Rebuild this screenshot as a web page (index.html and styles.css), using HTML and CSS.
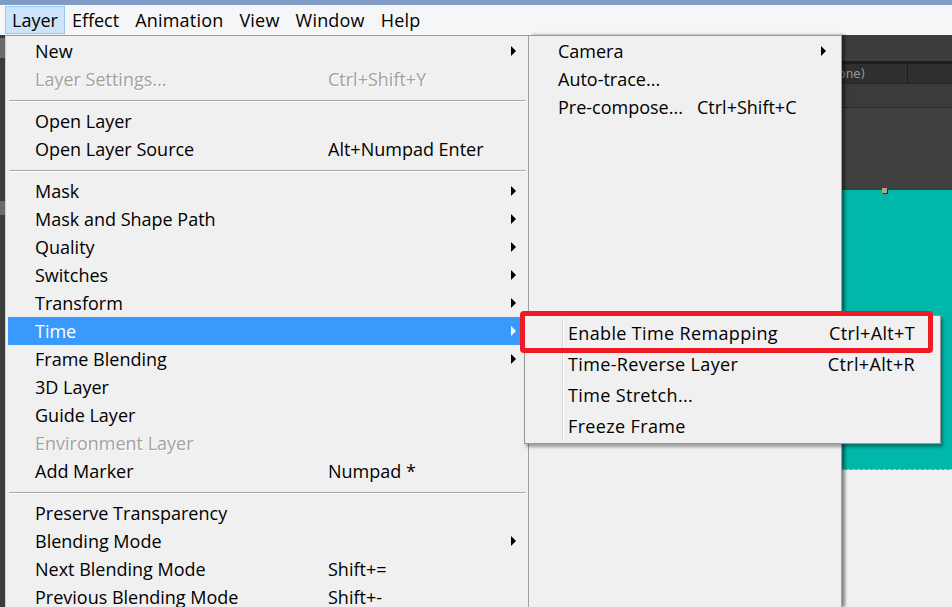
FILE: index.html
```html
<!DOCTYPE html>
<html>
<head>
<meta charset="utf-8">
<link rel="stylesheet" href="styles.css">
</head>
<body>
<div class="screen">
  <div class="titlestrip"></div>
  <div class="menubar">
    <span class="mb-item active">Layer</span>
    <span class="mb-item">Effect</span>
    <span class="mb-item">Animation</span>
    <span class="mb-item">View</span>
    <span class="mb-item">Window</span>
    <span class="mb-item">Help</span>
  </div>
  <div class="workspace">
    <div class="leftstrip"><div class="ls-icon"></div><div class="ls-light"></div></div>
    <div class="menu main">
      <div class="item"><span class="label">New</span><span class="key"></span><span class="arrow"></span></div>
      <div class="item disabled"><span class="label">Layer Settings...</span><span class="key">Ctrl+Shift+Y</span></div>
      <div class="sep"></div>
      <div class="item"><span class="label">Open Layer</span><span class="key"></span></div>
      <div class="item"><span class="label">Open Layer Source</span><span class="key">Alt+Numpad Enter</span></div>
      <div class="sep"></div>
      <div class="item"><span class="label">Mask</span><span class="key"></span><span class="arrow"></span></div>
      <div class="item"><span class="label">Mask and Shape Path</span><span class="key"></span><span class="arrow"></span></div>
      <div class="item"><span class="label">Quality</span><span class="key"></span><span class="arrow"></span></div>
      <div class="item"><span class="label">Switches</span><span class="key"></span><span class="arrow"></span></div>
      <div class="item"><span class="label">Transform</span><span class="key"></span><span class="arrow"></span></div>
      <div class="item hot"><span class="label">Time</span><span class="key"></span><span class="arrow"></span></div>
      <div class="item"><span class="label">Frame Blending</span><span class="key"></span><span class="arrow"></span></div>
      <div class="item"><span class="label">3D Layer</span><span class="key"></span></div>
      <div class="item"><span class="label">Guide Layer</span><span class="key"></span></div>
      <div class="item disabled"><span class="label">Environment Layer</span><span class="key"></span></div>
      <div class="item"><span class="label">Add Marker</span><span class="key">Numpad *</span></div>
      <div class="sep"></div>
      <div class="item"><span class="label">Preserve Transparency</span><span class="key"></span></div>
      <div class="item"><span class="label">Blending Mode</span><span class="key"></span><span class="arrow"></span></div>
      <div class="item"><span class="label">Next Blending Mode</span><span class="key">Shift+=</span></div>
      <div class="item"><span class="label">Previous Blending Mode</span><span class="key">Shift+-</span></div>
    </div>
    <div class="menu second">
      <div class="item"><span class="label">Camera</span><span class="key"></span><span class="arrow"></span></div>
      <div class="item"><span class="label">Auto-trace...</span><span class="key"></span></div>
      <div class="item"><span class="label">Pre-compose...</span><span class="key">Ctrl+Shift+C</span></div>
    </div>
    <div class="app">
      <div class="app-top"></div>
      <div class="app-tabs"><span class="tab first"><span class="tab-text">(none)</span></span><span class="tab"></span></div>
      <div class="app-row"></div>
      <div class="app-view"></div>
      <div class="comp"><div class="handle"></div></div>
      <div class="rest"></div>
    </div>
  </div>

  <div class="submenu">
    <div class="sub-item"><span class="label">Enable Time Remapping</span><span class="key">Ctrl+Alt+T</span></div>
    <div class="sub-item"><span class="label">Time-Reverse Layer</span><span class="key">Ctrl+Alt+R</span></div>
    <div class="sub-item"><span class="label">Time Stretch...</span><span class="key"></span></div>
    <div class="sub-item"><span class="label">Freeze Frame</span><span class="key"></span></div>
  </div>
  <div class="callout"></div>
</div>
</body>
</html>
```

FILE: styles.css
```css
* { box-sizing: border-box; }
html, body { margin: 0; padding: 0; }
body {
  width: 952px;
  height: 607px;
  overflow: hidden;
  background: #f0f0f0;
  font-family: "Open Sans", "Noto Sans", sans-serif;
  font-size: 18px;
  color: #000;
}
.screen {
  position: relative;
  width: 952px;
  height: 607px;
  display: flex;
  flex-direction: column;
}
.titlestrip {
  height: 5px;
  background: #8199c5;
  flex: none;
}
.menubar {
  height: 30px;
  flex: none;
  background: #f5f6f7;
  display: flex;
  align-items: stretch;
  padding: 1px 0 1px 5px;
}
.mb-item {
  display: flex;
  align-items: center;
  padding: 0 6px 1px;
  border: 1px solid transparent;
  line-height: 1;
}
.mb-item + .mb-item + .mb-item {
  margin-left: 2px;
  letter-spacing: 0.2px;
}
.mb-item.active {
  background: #cce4f7;
  border-color: #99c9ef;
}
.workspace {
  flex: 1;
  display: flex;
  min-height: 0;
}
.leftstrip {
  width: 5px;
  flex: none;
  background: #3b3b3b;
  display: flex;
  flex-direction: column;
}
.ls-icon {
  height: 20px;
  margin-top: 3px;
  background: #8a8a8a;
  opacity: .6;
}
.ls-light {
  height: 14px;
  margin-top: 143px;
  background: #6a6a6a;
}
.menu {
  background: #f0f0f0;
  border-top: 1px solid #979797;
  padding-top: 1px;
  flex: none;
}
.main {
  width: 524px;
  border-left: 1px solid #d0d0d0;
  border-right: 1px solid #a0a0a0;
}
.second {
  width: 313px;
  border-right: 1px solid #a0a0a0;
  box-shadow: 3px 0 3px rgba(0,0,0,.45);
  position: relative;
  z-index: 1;
}
.item {
  height: 28px;
  margin: 0 2px;
  display: grid;
  align-items: center;
  position: relative;
  white-space: nowrap;
  line-height: 1;
  padding-bottom: 1px;
}
.main .item {
  grid-template-columns: 293px 1fr;
  padding-left: 27px;
}
.second .item {
  grid-template-columns: 139px 1fr;
  padding-left: 27px;
}
.item.disabled { color: #a2a2a2; text-shadow: 1px 1px 0 #fff; }
.item.hot { background: #3a99fd; color: #fff; }
.arrow {
  position: absolute;
  top: 9px;
  right: 10px;
  width: 0;
  height: 0;
  border-left: 5px solid #000;
  border-top: 5px solid transparent;
  border-bottom: 5px solid transparent;
}
.second .arrow { right: 13px; }
.item.hot .arrow { border-left-color: #fff; }
.sep {
  height: 14px;
  margin: 0 2px 0 3px;
  display: flex;
  align-items: center;
}
.sep::before {
  content: "";
  display: block;
  width: 100%;
  height: 1px;
  background: #a8a8a8;
  box-shadow: 0 1px 0 #fff;
}

.app {
  flex: 1;
  display: flex;
  flex-direction: column;
  min-width: 0;
}
.app-top {
  height: 29px;
  background: #3d3d3d;
  border-bottom: 3px solid #1f1f1f;
  flex: none;
}
.app-tabs {
  height: 19px;
  background: #2f2f2f;
  display: flex;
  flex: none;
}
.tab {
  font-family: "DejaVu Sans", sans-serif;
  font-size: 12px;
  color: #9a9a9a;
  display: flex;
  align-items: center;
  line-height: 1;
  border-right: 1px solid #1c1c1c;
  white-space: nowrap;
}
.tab.first {
  width: 66px;
}
.tab-text { margin-left: -16px; }
.tab:last-child { flex: 1; border-right: none; }
.app-row {
  height: 25px;
  background: #3b3b3b;
  border-top: 1px solid #262626;
  border-bottom: 1px solid #2a2a2a;
  flex: none;
}
.app-view {
  height: 82px;
  background: #404040;
  flex: none;
}
.comp {
  height: 280px;
  background: #00b8a9;
  flex: none;
  position: relative;
  border-bottom: 1px dashed #8fdcd4;
}
.handle {
  position: absolute;
  left: 40px;
  top: -2px;
  width: 5px;
  height: 5px;
  background: #b3a384;
  box-shadow: 1px 1px 0 #2a2a2a;
}
.rest {
  flex: 1;
  background: #f0f0f0;
}

.submenu {
  position: absolute;
  left: 524px;
  top: 315px;
  width: 417px;
  height: 129px;
  background: #f0f0f0;
  border: 1px solid #979797;
  padding: 2px;
  box-shadow: 2px 3px 3px rgba(0,0,0,.35);
  z-index: 2;
}
.submenu::before {
  content: "";
  position: absolute;
  left: 37px;
  top: 2px;
  bottom: 2px;
  width: 1px;
  background: #d8d8d8;
  box-shadow: 1px 0 0 #fff;
}
.sub-item {
  height: 31px;
  display: flex;
  align-items: center;
  justify-content: space-between;
  padding: 0 23px 1px 41px;
  white-space: nowrap;
  line-height: 1;
  letter-spacing: 0.35px;
}
.callout {
  position: absolute;
  left: 520px;
  top: 311px;
  width: 413px;
  height: 42px;
  border: 5px solid #ed1c24;
  border-radius: 4px;
  z-index: 3;
}
```
